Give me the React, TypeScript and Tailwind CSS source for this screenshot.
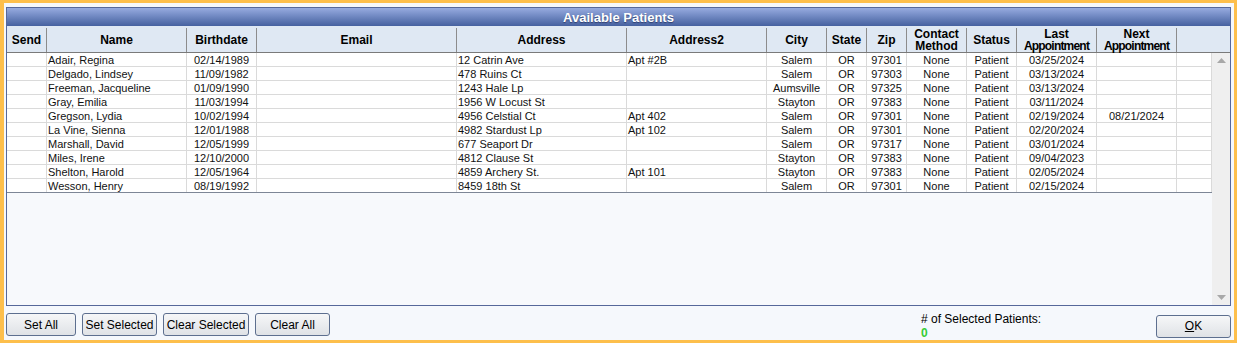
import React from "react";

type Col = { key: string; label: string[]; w: string; align: "left" | "center"; tight?: boolean };

const cols: Col[] = [
  { key: "send", label: ["Send"], w: "w-[40px]", align: "center" },
  { key: "name", label: ["Name"], w: "w-[140px]", align: "left" },
  { key: "birth", label: ["Birthdate"], w: "w-[70px]", align: "center" },
  { key: "email", label: ["Email"], w: "w-[200px]", align: "left" },
  { key: "addr", label: ["Address"], w: "w-[170px]", align: "left" },
  { key: "addr2", label: ["Address2"], w: "w-[140px]", align: "left" },
  { key: "city", label: ["City"], w: "w-[60px]", align: "center" },
  { key: "state", label: ["State"], w: "w-[40px]", align: "center" },
  { key: "zip", label: ["Zip"], w: "w-[40px]", align: "center" },
  { key: "contact", label: ["Contact", "Method"], w: "w-[60px]", align: "center" },
  { key: "status", label: ["Status"], w: "w-[50px]", align: "center" },
  { key: "last", label: ["Last", "Appointment"], w: "w-[80px]", align: "center", tight: true },
  { key: "next", label: ["Next", "Appointment"], w: "w-[80px]", align: "center", tight: true },
];

const patients: Record<string, string>[] = [
  { name: "Adair, Regina", birth: "02/14/1989", addr: "12 Catrin Ave", addr2: "Apt #2B", city: "Salem", zip: "97301", last: "03/25/2024", next: "" },
  { name: "Delgado, Lindsey", birth: "11/09/1982", addr: "478 Ruins Ct", addr2: "", city: "Salem", zip: "97303", last: "03/13/2024", next: "" },
  { name: "Freeman, Jacqueline", birth: "01/09/1990", addr: "1243 Hale Lp", addr2: "", city: "Aumsville", zip: "97325", last: "03/13/2024", next: "" },
  { name: "Gray, Emilia", birth: "11/03/1994", addr: "1956 W Locust St", addr2: "", city: "Stayton", zip: "97383", last: "03/11/2024", next: "" },
  { name: "Gregson, Lydia", birth: "10/02/1994", addr: "4956 Celstial Ct", addr2: "Apt 402", city: "Salem", zip: "97301", last: "02/19/2024", next: "08/21/2024" },
  { name: "La Vine, Sienna", birth: "12/01/1988", addr: "4982 Stardust Lp", addr2: "Apt 102", city: "Salem", zip: "97301", last: "02/20/2024", next: "" },
  { name: "Marshall, David", birth: "12/05/1999", addr: "677 Seaport Dr", addr2: "", city: "Salem", zip: "97317", last: "03/01/2024", next: "" },
  { name: "Miles, Irene", birth: "12/10/2000", addr: "4812 Clause St", addr2: "", city: "Stayton", zip: "97383", last: "09/04/2023", next: "" },
  { name: "Shelton, Harold", birth: "12/05/1964", addr: "4859 Archery St.", addr2: "Apt 101", city: "Stayton", zip: "97383", last: "02/05/2024", next: "" },
  { name: "Wesson, Henry", birth: "08/19/1992", addr: "8459 18th St", addr2: "", city: "Salem", zip: "97301", last: "02/15/2024", next: "" },
].map((p) => ({ ...p, send: "", email: "", state: "OR", contact: "None", status: "Patient" }));

const font = { fontFamily: "'Liberation Sans', Arial, sans-serif" };

const Btn = ({ w, children }: { w: string; children: React.ReactNode }) => (
  <button
    className={`${w} h-[23px] rounded-[3px] border border-[#5d6f8f] bg-gradient-to-b from-[#f6f7f8] to-[#dfe2e6] text-[12px] text-black leading-none`}
  >
    {children}
  </button>
);

export default function App() {
  return (
    <div className="w-[1237px] h-[343px] bg-[#fdbf4c] pl-[4px] pt-[3px] pr-[3px] pb-[3px]" style={font}>
      <div className="h-full bg-[#f5f8fc] pl-[2px] pr-[3px] pt-[4px] flex flex-col">
        {/* grid panel */}
        <div className="h-[300px] border border-[#56689a] flex flex-col bg-white">
          <div className="h-[18px] bg-gradient-to-b from-[#97abe0] to-[#46619f] flex items-center justify-center">
            <span className="text-white font-bold text-[13px] leading-none [text-shadow:0_1px_1px_rgba(20,30,70,0.6)]">
              Available Patients
            </span>
          </div>

          {/* header */}
          <div className="h-[27px] bg-[#dfe8f3] border-b border-[#7a7a7a] pt-[2px] flex">
            {cols.map((c) => (
              <div
                key={c.key}
                className={`${c.w} shrink-0 h-full border-r border-[#8c8c8c] flex flex-col items-center justify-center font-bold text-[12px] leading-[12px] text-black`}
              >
                {c.label.map((l) => (
                  <span key={l} className={c.tight && l === "Appointment" ? "tracking-[-0.8px]" : ""}>
                    {l}
                  </span>
                ))}
              </div>
            ))}
          </div>

          {/* body */}
          <div className="flex-1 flex">
            <div className="w-[1205px] bg-[#f7f9fc]">
              {patients.map((p, i) => (
                <div
                  key={p.name}
                  className={`h-[14px] flex bg-white border-b ${i === patients.length - 1 ? "border-[#7d8696]" : "border-[#dadada]"}`}
                >
                  {cols.map((c) => (
                    <div
                      key={c.key}
                      className={`${c.w} shrink-0 h-[13px] border-r border-[#dadada] text-[11px] leading-[15px] text-[#111] whitespace-nowrap overflow-hidden ${
                        c.align === "center" ? "text-center" : "text-left pl-[1px]"
                      }`}
                    >
                      {p[c.key]}
                    </div>
                  ))}
                  <div className="w-[35px] shrink-0 border-r border-[#dadada]" />
                </div>
              ))}
            </div>
            {/* scrollbar */}
            <div className="w-[18px] bg-[#efefef] flex flex-col items-center justify-between py-[5px]">
              <svg width="9" height="5" viewBox="0 0 9 5">
                <path d="M4.5 0 L9 5 L0 5 Z" fill="#a8a8a8" />
              </svg>
              <svg width="9" height="5" viewBox="0 0 9 5">
                <path d="M0 0 L9 0 L4.5 5 Z" fill="#a8a8a8" />
              </svg>
            </div>
          </div>
        </div>

        {/* footer */}
        <div className="mt-[7px] flex items-start">
          <div className="flex gap-[6px]">
            <Btn w="w-[70px]">Set All</Btn>
            <Btn w="w-[75px]">Set Selected</Btn>
            <Btn w="w-[86px]">Clear Selected</Btn>
            <Btn w="w-[75px]">Clear All</Btn>
          </div>
          <div className="ml-[591px] -mt-[1px] text-[12px] leading-[14px] text-black">
            <div># of Selected Patients:</div>
            <div className="text-[#35cc35] font-bold">0</div>
          </div>
          <div className="ml-auto">
            <Btn w="w-[75px]">
              <span className="underline">O</span>K
            </Btn>
          </div>
        </div>
      </div>
    </div>
  );
}
